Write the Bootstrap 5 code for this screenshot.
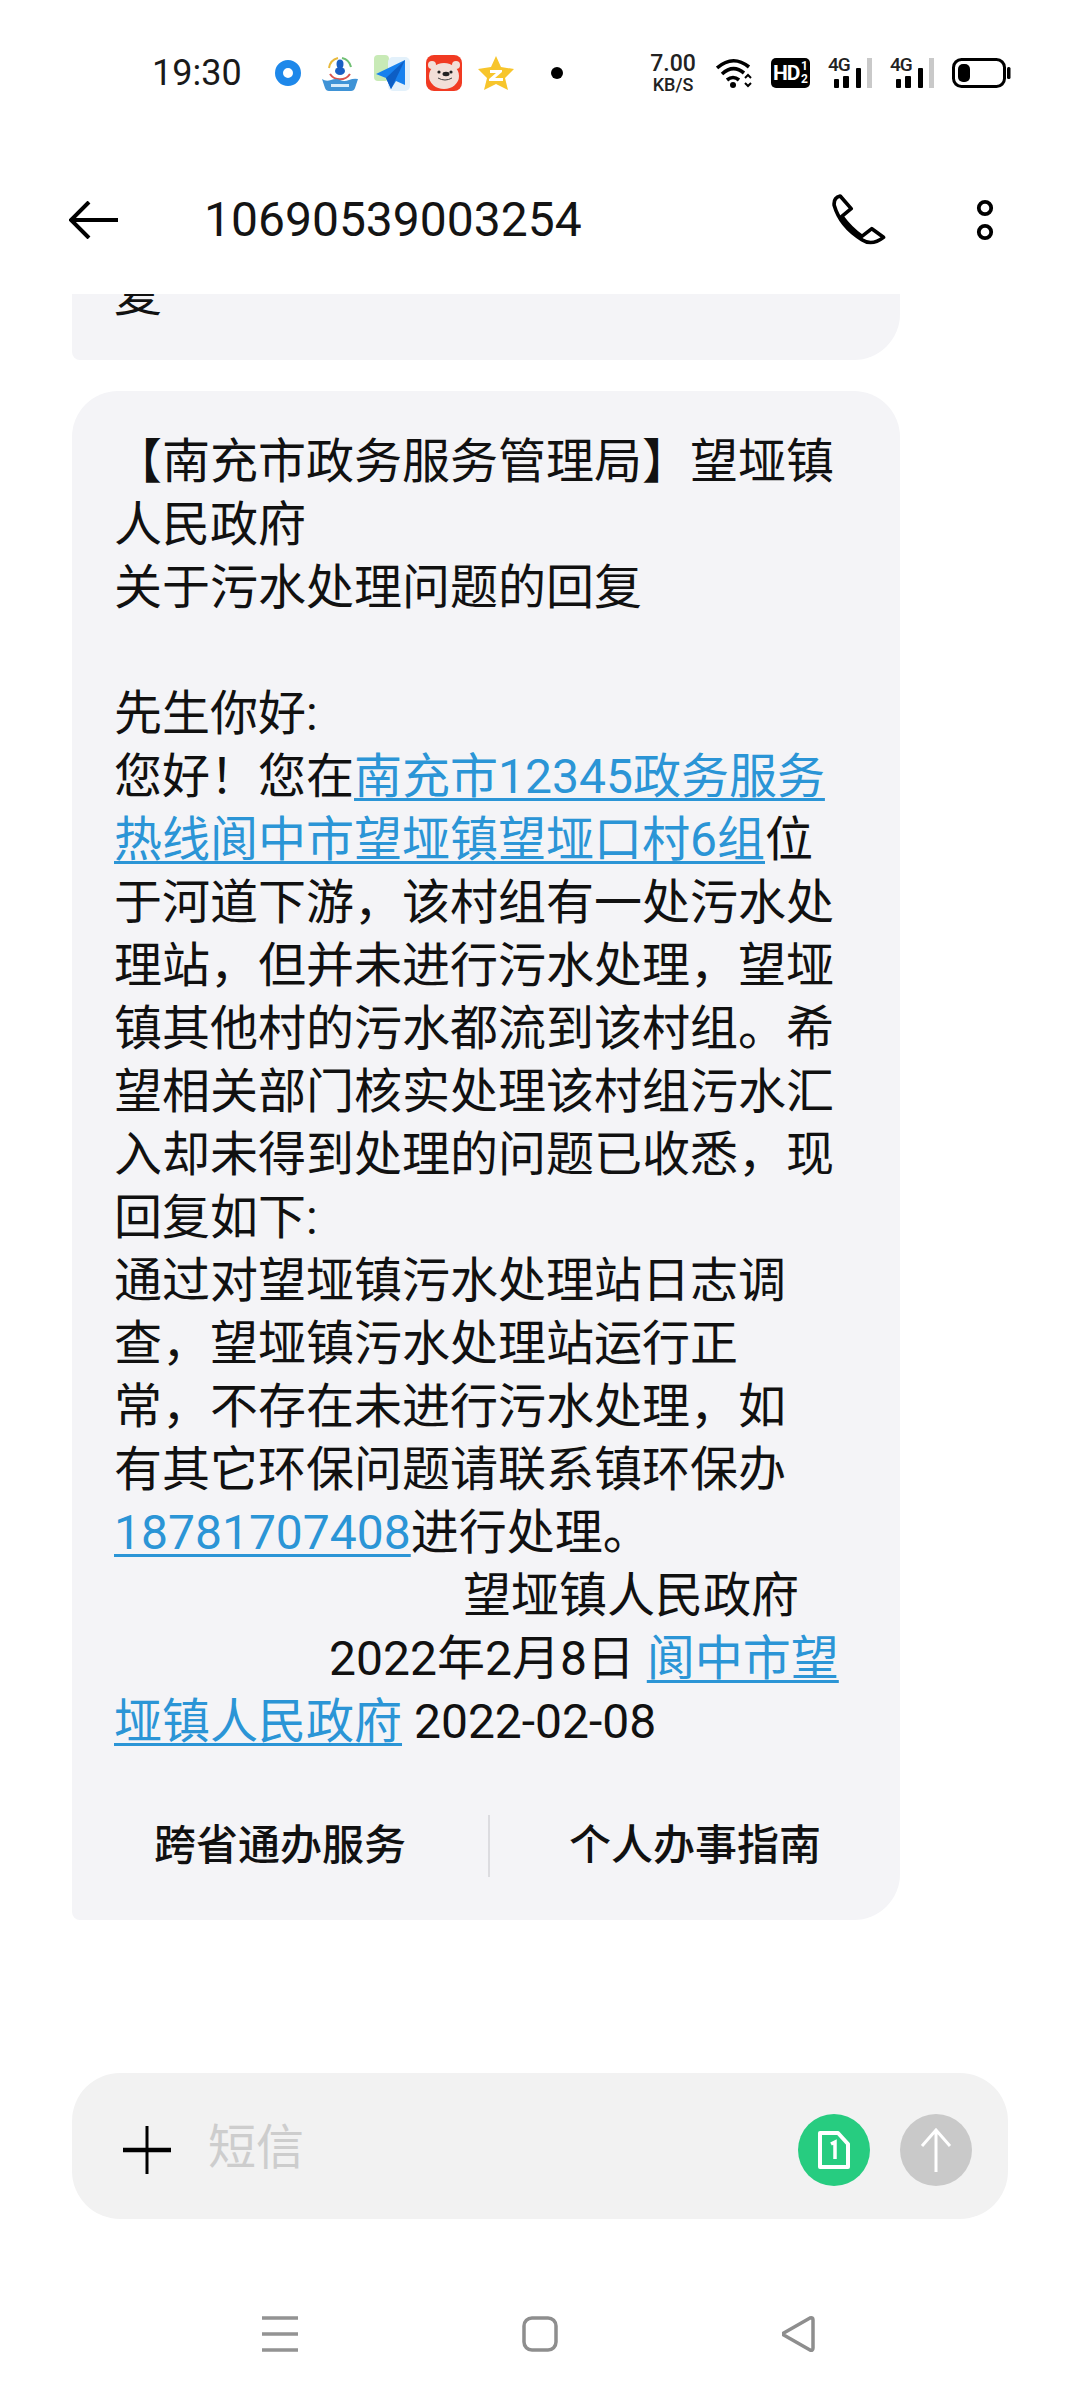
<!DOCTYPE html>
<html lang="zh">
<head>
  <meta charset="UTF-8" />
  <title>短信</title>
  <link href="https://cdn.jsdelivr.net/npm/bootstrap@5.3.3/dist/css/bootstrap.min.css" rel="stylesheet"/>
  <style>
    body {
      background: #fff;
      color: #111;
      font-family: Roboto, "Noto Sans CJK SC", sans-serif;
      margin: 0;
    }
    .phone-page { width: 1080px; height: 2400px; overflow: hidden; }

    /* status bar */
    .status-bar { height: 145px; padding-left: 152px; flex: none; }
    .status-time { font-size: 36px; width: 118px; line-height: 1; color: #1a1a1a; }
    .status-apps { gap: 16px; width: 301px; }
    .status-dot { width: 12px; height: 12px; border-radius: 50%; background: #000; margin-left: 21px; }
    .status-right { margin-left: 77px; }
    .net-speed { width: 50px; margin-right: 18px; text-align: center; color: #222; }
    .net-speed b { display: block; font-weight: 500; font-size: 23px; line-height: 24px; }
    .net-speed i { display: block; font-style: normal; font-weight: 500; font-size: 18px; line-height: 18px; }
    .hd-badge { width: 39px; height: 30px; background: #000; border-radius: 5px; color: #fff; margin: 0 18px 0 17px; font-weight: 700; font-size: 21px; line-height: 30px; padding-left: 2px; letter-spacing: -1px; overflow: hidden; position: relative; }
    .hd-frac { position: absolute; right: 2px; top: 2px; font-size: 12px; line-height: 13px; text-align: center; letter-spacing: 0; }
    .sig-item { width: 44px; height: 30px; margin-right: 18px; position: relative; }
    .sig-label { position: absolute; left: 0; top: -3px; font-size: 19px; font-weight: 500; letter-spacing: -1px; line-height: 20px; color: #222; }

    /* header */
    .top-bar { height: 149px; flex: none; padding-left: 69px; }
    .top-title { font-size: 48px; line-height: 1; margin-left: 86px; width: 628px; color: #141414; }
    .top-phone { margin-right: 89px; }

    /* thread */
    .thread { flex: 1 1 auto; min-height: 0; overflow: hidden; padding-left: 72px; }
    .bubble { width: 828px; background: #f4f4f7; border-radius: 46px 46px 46px 8px; font-size: 48px; line-height: 63px; }
    .bubble-cut { margin-top: -69px; padding: 38px 42px 34px; }
    .bubble-main { margin-top: 31px; padding: 39px 0 0 42px; height: 1529px; }
    .bubble-main a { color: #2b95d6; text-decoration: underline; text-decoration-thickness: 3px; text-underline-offset: 5px; }
    .indent-name { padding-left: 349px; }
    .indent-date { padding-left: 215px; }
    .bubble-actions { margin: 62px 0 0 -42px; height: 62px; font-size: 42px; font-weight: 500; line-height: 62px; }
    .act-left { width: 416px; text-align: center; color: #111; }
    .act-sep { width: 2px; height: 62px; background: #dcdce0; }
    .act-right { width: 410px; text-align: center; color: #111; }

    /* composer */
    .composer { flex: none; height: 146px; margin: 0 72px 0 72px; background: #f2f2f2; border-radius: 48px; padding: 8px 0 0 51px; }
    .composer-hint { font-size: 48px; color: #cdcdcd; margin: -4px 0 0 37px; width: 590px; line-height: 1; }
    .round-btn { width: 72px; height: 72px; border-radius: 50%; }
    .round-sim { background: #27cc80; margin-right: 30px; }
    .round-send { background: #c9c9c9; }

    /* nav buttons */
    .nav-keys { flex: none; gap: 224px; padding-top: 97px; height: 181px; }
  </style>
</head>
<body>
  <div class="phone-page d-flex flex-column">
    <!-- Status bar -->
    <div class="status-bar d-flex align-items-center">
      <div class="status-time">19:30</div>
      <div class="status-apps d-flex align-items-center">
        <svg width="36" height="36" viewBox="0 0 36 36"><circle cx="18" cy="18" r="9" fill="none" stroke="#1e88ea" stroke-width="8"/></svg>
        <svg width="36" height="36" viewBox="0 0 36 36">
          <path d="M7 13a12 12 0 0 1 9-10" fill="none" stroke="#e8b93c" stroke-width="2"/>
          <path d="M20 3a12 12 0 0 1 9 9" fill="none" stroke="#6fbf73" stroke-width="2"/>
          <path d="M8 19a12 12 0 0 0 20 0" fill="none" stroke="#d9534f" stroke-width="2"/>
          <ellipse cx="18" cy="9" rx="3.5" ry="4.5" fill="#1b5fc4"/><ellipse cx="18" cy="16" rx="5" ry="4" fill="#1b5fc4"/>
          <path d="M0 24q4 3 9 1t9 0 9 0 9-1l-3 9q-1 3-4 3H7q-3 0-4-3z" fill="#3f93d6"/>
          <rect x="9" y="29" width="18" height="3" fill="#d8ecfa"/>
        </svg>
        <svg width="36" height="36" viewBox="0 0 36 36">
          <rect x="0" y="0" width="15" height="26" rx="4" fill="#c8eab6"/>
          <rect x="14" y="2" width="22" height="34" rx="5" fill="#e3f1fb"/>
          <path d="M31 5 2 19l10 4 5 11 5-8 9 4z" fill="#1781ee"/><path d="M31 5 12 23l5 11z" fill="#0d5ec4"/>
        </svg>
        <svg width="36" height="36" viewBox="0 0 36 36">
          <rect width="36" height="36" rx="8" fill="#f13a22"/>
          <ellipse cx="18" cy="21" rx="15" ry="13" fill="#f2dfd8"/><circle cx="6" cy="10" r="4" fill="#f2dfd8"/><circle cx="30" cy="10" r="4" fill="#f2dfd8"/>
          <circle cx="13" cy="17" r="1.6" fill="#222"/><circle cx="25" cy="17" r="1.6" fill="#222"/><ellipse cx="20" cy="19" rx="3.5" ry="2.2" fill="#222"/>
          <path d="M12 23q7 4 14 0" fill="none" stroke="#444" stroke-width="1"/>
        </svg>
        <svg width="36" height="36" viewBox="0 0 36 36">
          <path d="M18 1l5 11 13 2-9 9 3 12-12-6-12 6 3-12-9-9 13-2z" fill="#f7c52c"/>
          <path d="M12 15h12v2l-7 6h8v3H11v-2l7-6h-6z" fill="#fff"/>
        </svg>
        <div class="status-dot"></div>
      </div>
      <div class="status-right d-flex align-items-center">
        <div class="net-speed"><b>7.00</b><i>KB/S</i></div>
        <svg width="38" height="30" viewBox="0 0 38 30">
          <path d="M1 10Q17-4 33 9M6 16Q17 6 28 15M11 22q6-5 12 0" fill="none" stroke="#000" stroke-width="3.6"/>
          <circle cx="17" cy="27" r="3" fill="#000"/>
          <path d="M29 20l3-3 3 3M29 25l3 3 3-3" fill="none" stroke="#000" stroke-width="2"/>
        </svg>
        <div class="hd-badge">HD<span class="hd-frac">1<br>2</span></div>
        <div class="sig-item">
          <span class="sig-label">4G</span>
          <svg width="44" height="30" viewBox="0 0 44 30">
            <rect x="6" y="21" width="5" height="9" rx="1" fill="#000"/><rect x="15" y="18" width="6" height="12" rx="1" fill="#000"/><rect x="28" y="10" width="5" height="20" rx="1" fill="#000"/><rect x="39" y="0" width="5" height="30" fill="#c9c9c9"/>
          </svg>
        </div>
        <div class="sig-item">
          <span class="sig-label">4G</span>
          <svg width="44" height="30" viewBox="0 0 44 30">
            <rect x="6" y="21" width="5" height="9" rx="1" fill="#000"/><rect x="15" y="18" width="6" height="12" rx="1" fill="#000"/><rect x="28" y="10" width="5" height="20" rx="1" fill="#000"/><rect x="39" y="0" width="5" height="30" fill="#c9c9c9"/>
          </svg>
        </div>
        <svg width="59" height="30" viewBox="0 0 59 30">
          <rect x="1.5" y="1.5" width="51" height="27" rx="8" fill="none" stroke="#000" stroke-width="3"/>
          <rect x="6" y="6" width="12" height="18" rx="5" fill="#000"/>
          <rect x="55" y="9" width="3.5" height="12" rx="1.5" fill="#000"/>
        </svg>
      </div>
    </div>

    <!-- Header -->
    <div class="top-bar d-flex align-items-center">
      <svg width="49" height="38" viewBox="0 0 49 38"><path d="M20 1 2 19l18 18M2 19h47" fill="none" stroke="#000" stroke-width="4"/></svg>
      <div class="top-title">10690539003254</div>
      <svg class="top-phone" width="55" height="52" viewBox="36 28 164 156"><path d="M60 34Q40 38 42 62 60 125 125 165 155 185 190 158L155 132 125 155Q90 130 65 95L93 72Z" fill="none" stroke="#000" stroke-width="11" stroke-linejoin="round"/></svg>
      <svg width="18" height="42" viewBox="0 0 18 42"><circle cx="9" cy="9" r="6.2" fill="none" stroke="#000" stroke-width="3.8"/><circle cx="9" cy="33" r="6.2" fill="none" stroke="#000" stroke-width="3.8"/></svg>
    </div>

    <!-- Messages -->
    <div class="thread">
      <div class="bubble bubble-cut">复</div>
      <div class="bubble bubble-main">
        <div class="text-nowrap">【南充市政务服务管理局】望垭镇<br>人民政府<br>关于污水处理问题的回复<br><br>先生你好:<br>您好！您在<a href="#">南充市12345政务服务<br>热线阆中市望垭镇望垭口村6组</a>位<br>于河道下游，该村组有一处污水处<br>理站，但并未进行污水处理，望垭<br>镇其他村的污水都流到该村组。希<br>望相关部门核实处理该村组污水汇<br>入却未得到处理的问题已收悉，现<br>回复如下:<br>通过对望垭镇污水处理站日志调<br>查，望垭镇污水处理站运行正<br>常，不存在未进行污水处理，如<br>有其它环保问题请联系镇环保办<br><a href="#">18781707408</a>进行处理。<br><span class="indent-name">望垭镇人民政府</span><br><span class="indent-date">2022年2月8日</span> <a href="#">阆中市望<br>垭镇人民政府</a> 2022-02-08</div>
        <div class="bubble-actions d-flex align-items-center">
          <div class="act-left">跨省通办服务</div>
          <div class="act-sep"></div>
          <div class="act-right">个人办事指南</div>
        </div>
      </div>
    </div>

    <!-- Composer -->
    <div class="composer d-flex align-items-center">
      <svg width="48" height="48" viewBox="0 0 48 48"><path d="M24 0v48" stroke="#000" stroke-width="3"/><path d="M0 24h48" stroke="#000" stroke-width="4.5"/></svg>
      <div class="composer-hint">短信</div>
      <div class="round-btn round-sim d-flex align-items-center justify-content-center">
        <svg width="34" height="40" viewBox="0 0 34 40">
          <path d="M3 3h18l10 11v23H3z" fill="none" stroke="#fff" stroke-width="4" stroke-linejoin="round"/>
          <path d="M14 14l4-2v17" fill="none" stroke="#fff" stroke-width="3.5"/>
        </svg>
      </div>
      <div class="round-btn round-send d-flex align-items-center justify-content-center">
        <svg width="32" height="44" viewBox="0 0 32 44"><path d="M16 44V2M2 18 16 2l14 16" fill="none" stroke="#fff" stroke-width="3"/></svg>
      </div>
    </div>

    <!-- Nav keys -->
    <div class="nav-keys d-flex justify-content-center align-items-start">
      <svg width="36" height="36" viewBox="0 0 36 36"><path d="M0 2h36M0 18h36M0 34h36" stroke="#939393" stroke-width="3.5"/></svg>
      <svg width="36" height="36" viewBox="0 0 36 36"><rect x="2" y="2" width="32" height="32" rx="8" fill="none" stroke="#8e8e8e" stroke-width="3.5"/></svg>
      <svg width="36" height="36" viewBox="3 0 36 36"><path d="M3 18 31 2q3-1 3 2v28q0 3-3 2z" fill="none" stroke="#8e8e8e" stroke-width="3.5" stroke-linejoin="round"/></svg>
    </div>
  </div>
  <script src="https://cdn.jsdelivr.net/npm/bootstrap@5.3.3/dist/js/bootstrap.bundle.min.js"></script>
</body>
</html>
